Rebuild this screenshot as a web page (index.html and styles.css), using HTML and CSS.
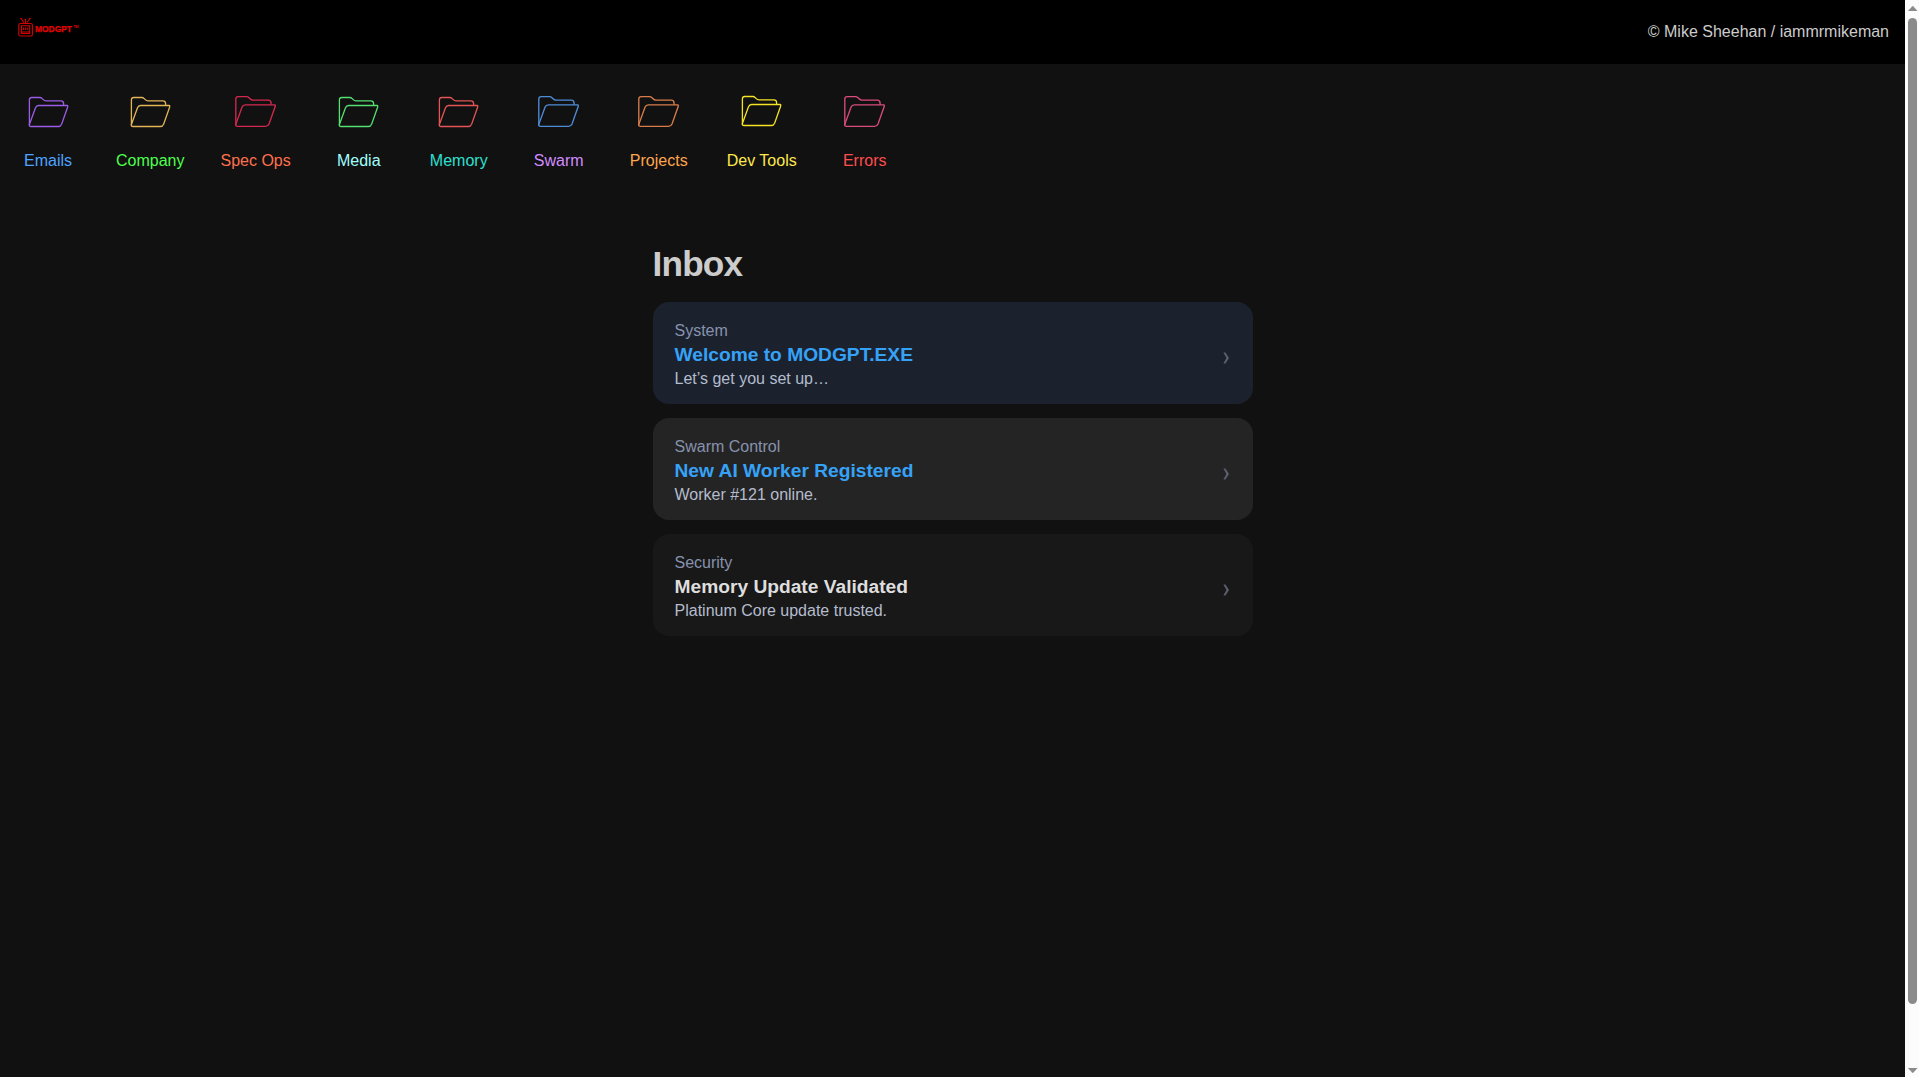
FILE: index.html
```html
<!DOCTYPE html>
<html lang="en">
<head>
<meta charset="utf-8">
<title>MODGPT</title>
<link rel="stylesheet" href="styles.css">
</head>
<body>
<svg class="defs" aria-hidden="true">
  <symbol id="folder" viewBox="0 0 41 32">
    <path d="M1.4 29.5V3.8Q1.4 1.5 3.7 1.5H11.8Q13.1 1.5 14.2 2.6L15.2 3.6Q16.5 4.9 18 4.9H32.8Q35.6 4.9 35.6 7.7V9.5"/>
    <path d="M39.6 9.5H10.6Q8.4 9.5 7.5 11.7L1.4 28.5Q1 30.5 3 30.5H30.2Q32.6 30.5 33.6 28.2L39.6 11.2Q40 9.5 39.2 9.5"/>
  </symbol>
</svg>
<div class="window">
  <div class="page">
    <header class="topbar">
      <div class="logo">
        <svg class="robot" width="16" height="20" viewBox="0 0 16 20">
          <path d="M7.5 2V6M3 1.5L6 5.5M12 1.5L9 5.5"/>
          <path d="M2.2 1.5H4M6.7 2.2H8.3M11 1.5H12.8"/>
          <rect x=".8" y="6.5" width="13.6" height="12.5" rx="1.5"/>
          <path d="M3.5 8.7H11.7V16.5H3.5ZM5.5 10.5V13M7.6 10.5V13M9.7 10.5V13M4 15H11.5"/>
        </svg>
        <svg class="wordmark" width="46" height="12" viewBox="0 0 46 12">
          <text x="0" y="10" textLength="37" lengthAdjust="spacingAndGlyphs">MODGPT</text>
          <text class="tm" x="38.5" y="5.5" textLength="5" lengthAdjust="spacingAndGlyphs">TM</text>
        </svg>
      </div>
      <div class="credit">© Mike Sheehan / iammrmikeman</div>
    </header>
    <nav class="folders">
      <a class="folder emails"><svg><use href="#folder"/></svg><span>Emails</span></a>
      <a class="folder company"><svg><use href="#folder"/></svg><span>Company</span></a>
      <a class="folder specops large"><svg><use href="#folder"/></svg><span>Spec Ops</span></a>
      <a class="folder media"><svg><use href="#folder"/></svg><span>Media</span></a>
      <a class="folder memory"><svg><use href="#folder"/></svg><span>Memory</span></a>
      <a class="folder swarm large"><svg><use href="#folder"/></svg><span>Swarm</span></a>
      <a class="folder projects large"><svg><use href="#folder"/></svg><span>Projects</span></a>
      <a class="folder devtools"><svg><use href="#folder"/></svg><span>Dev Tools</span></a>
      <a class="folder errors large"><svg><use href="#folder"/></svg><span>Errors</span></a>
    </nav>
    <main class="inbox">
      <h1>Inbox</h1>
      <article class="mail unread selected">
        <div class="body"><div class="from">System</div><div class="subject">Welcome to MODGPT.EXE</div><div class="preview">Let’s get you set up…</div></div>
        <svg class="chevron" width="7" height="12" viewBox="0 0 7 12"><path d="M.4.5H2.4L6 6L2.4 11.5H.4L3.5 6Z"/></svg>
      </article>
      <article class="mail unread">
        <div class="body"><div class="from">Swarm Control</div><div class="subject">New AI Worker Registered</div><div class="preview">Worker #121 online.</div></div>
        <svg class="chevron" width="7" height="12" viewBox="0 0 7 12"><path d="M.4.5H2.4L6 6L2.4 11.5H.4L3.5 6Z"/></svg>
      </article>
      <article class="mail">
        <div class="body"><div class="from">Security</div><div class="subject">Memory Update Validated</div><div class="preview">Platinum Core update trusted.</div></div>
        <svg class="chevron" width="7" height="12" viewBox="0 0 7 12"><path d="M.4.5H2.4L6 6L2.4 11.5H.4L3.5 6Z"/></svg>
      </article>
    </main>
  </div>
  <div class="scrollbar">
    <svg width="10" height="5" viewBox="0 0 10 5"><path d="M0 5L4 .4Q4.75-.2 5.5.4L9.5 5Z"/></svg>
    <div class="thumb"></div>
    <svg width="10" height="5" viewBox="0 0 10 5"><path d="M0 0L4 4.6Q4.75 5.2 5.5 4.6L9.5 0Z"/></svg>
  </div>
</div>
</body>
</html>
```
FILE: styles.css
```css
* { box-sizing: border-box; }
body {
  margin: 0;
  background: #111;
  color: #ccc;
  font: 16px/18px "Liberation Sans", Arial, sans-serif;
  overflow: hidden;
}
.defs { display: none; }
.window { display: grid; grid-template-columns: 1fr 14px; height: 100vh; }
.topbar {
  display: flex;
  justify-content: space-between;
  align-items: center;
  height: 64px;
  padding: 0 16px;
  background: #000;
}
.logo { display: flex; align-items: center; gap: 1px; padding: 0 0 11px 2px; }
.robot { fill: none; stroke: #d40000; stroke-width: 1.1; }
.wordmark { margin-top: 2px; overflow: visible; fill: #e80000; }
.wordmark text { font: bold 9.6px "Liberation Sans", Arial, sans-serif; stroke: #e80000; stroke-width: .25; }
.wordmark .tm { font-size: 4px; stroke: none; }

.folders { display: flex; gap: 36px; padding: 16px 16px 0; }
.folder { display: flex; flex-direction: column; align-items: center; min-width: 64px; }
.folder svg { width: 41px; height: 32px; margin: 16px 0 24px; fill: none; stroke: currentColor; stroke-width: 1.3; }
.folder.large svg { width: 43px; height: 33px; margin: 15px 0 24px; }
.folder.devtools svg { margin: 15px 0 25px; }
.emails svg { color: #9b5de5; }
.company svg { color: #e4b557; }
.specops svg { color: #d4294f; }
.media svg { color: #55e070; }
.memory svg { color: #e55555; }
.swarm svg { color: #4f8cd8; }
.projects svg { color: #d87d4a; }
.devtools svg { color: #f5e423; }
.errors svg { color: #d94c7c; }
.emails { color: #4da3ff; }
.company { color: #4dff4d; }
.specops { color: #ff704d; }
.media { color: #a0ffff; }
.memory { color: #2de0d0; }
.swarm { color: #d18cff; }
.projects { color: #ffa64d; }
.devtools { color: #ffe94d; }
.errors { color: #ff4d4d; }

.inbox { width: 600px; margin: 74px auto 0; }
h1 { margin: 0 0 18px; font-size: 35.2px; line-height: 40px; letter-spacing: -.8px; }
.mail {
  display: flex;
  align-items: center;
  justify-content: space-between;
  height: 102px;
  margin-bottom: 14px;
  padding: 0 23px 0 22px;
  border-radius: 16px;
  background: #181818;
}
.mail.unread { background: #242424; }
.mail.selected { background: #1b222e; }
.body { line-height: 24px; padding-top: 4px; }
.from { color: #8792ae; }
.subject { font-size: 19.2px; font-weight: bold; color: #dedede; }
.unread .subject { color: #36a2f7; }
.preview { color: #b4bccd; }
.chevron { fill: #5b626d; margin-top: 9px; }

.scrollbar {
  display: flex;
  flex-direction: column;
  align-items: center;
  padding: 6px 1px 4px 2px;
  background: #fcfcfc;
}
.scrollbar svg { fill: #8b8b8b; }
.thumb { width: 9px; height: 986px; margin: 7px 0 auto; border-radius: 5px; background: #8b8b8b; }
```
